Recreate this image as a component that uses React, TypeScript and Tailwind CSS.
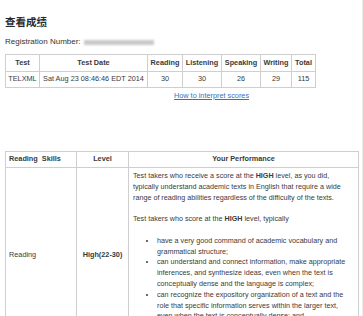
import React from 'react';

const scores = [
    { test: 'TELXML', date: 'Sat Aug 23 08:46:46 EDT 2014', reading: 30, listening: 30, speaking: 26, writing: 29, total: 115 },
];

const bullets = [
    'have a very good command of academic vocabulary and grammatical structure;',
    'can understand and connect information, make appropriate inferences, and synthesize ideas, even when the text is conceptually dense and the language is complex;',
    'can recognize the expository organization of a text and the role that specific information serves within the larger text, even when the text is conceptually dense; and',
    'can abstract major ideas from a text, even when the text is conceptually dense and contains complex language.',
];

function ScoreTable() {
    const th = 'border border-[#cfcfcf] h-[17px] font-bold text-center p-0';
    const td = 'border border-[#cfcfcf] h-[16px] text-center p-0';
    return (
        <table className="table-fixed border-collapse text-[7.3px] text-[#3a3a3a] w-[310px]">
            <colgroup>
                <col className="w-[34px]" />
                <col className="w-[108px]" />
                <col className="w-[35px]" />
                <col className="w-[39px]" />
                <col className="w-[39px]" />
                <col className="w-[31px]" />
                <col className="w-[24px]" />
            </colgroup>
            <thead>
                <tr>
                    <th className={th}>Test</th>
                    <th className={th}>Test Date</th>
                    <th className={th}>Reading</th>
                    <th className={th}>Listening</th>
                    <th className={th}>Speaking</th>
                    <th className={th}>Writing</th>
                    <th className={th}>Total</th>
                </tr>
            </thead>
            <tbody>
                {scores.map((s) => (
                    <tr key={s.test}>
                        <td className={td}>{s.test}</td>
                        <td className={td}>{s.date}</td>
                        <td className={td}>{s.reading}</td>
                        <td className={td}>{s.listening}</td>
                        <td className={td}>{s.speaking}</td>
                        <td className={td}>{s.writing}</td>
                        <td className={td}>{s.total}</td>
                    </tr>
                ))}
            </tbody>
        </table>
    );
}

function SkillsTable() {
    const cell = 'border border-[#cfcfcf]';
    return (
        <table className="table-fixed border-collapse text-[7.3px] text-[#3a3a3a] w-[353px]">
            <colgroup>
                <col className="w-[71px]" />
                <col className="w-[52px]" />
                <col className="w-[230px]" />
            </colgroup>
            <thead>
                <tr>
                    <th className={`${cell} h-[16px] text-left font-bold pl-[3px] py-0`}>Reading&nbsp;&nbsp;Skills</th>
                    <th className={`${cell} h-[16px] text-center font-bold p-0`}>Level</th>
                    <th className={`${cell} h-[16px] text-center font-bold p-0`}>Your Performance</th>
                </tr>
            </thead>
            <tbody>
                <tr>
                    <td className={`${cell} pl-[3px] align-middle`}>Reading</td>
                    <td className={`${cell} text-center font-bold align-middle`}>High(22-30)</td>
                    <td className={`${cell} align-top pl-[4px] pr-[4px] pt-[3px] text-[7.2px] leading-[10.8px]`}>
                        <p className="mb-[10.8px]">
                            Test takers who receive a score at the <b>HIGH</b> level, as you did, typically understand academic
                            texts in English that require a wide range of reading abilities regardless of the difficulty of the texts.
                        </p>
                        <p className="mb-[10.8px]">
                            Test takers who score at the <b>HIGH</b> level, typically
                        </p>
                        <ul className="list-disc pl-[24px]">
                            {bullets.map((b) => (
                                <li key={b}>{b}</li>
                            ))}
                        </ul>
                    </td>
                </tr>
            </tbody>
        </table>
    );
}

export default function App() {
    return (
        <div className="w-[363px] h-[316px] overflow-hidden bg-white border-r border-[#ececec] text-[#333] font-['Liberation_Sans','Noto_Sans_CJK_SC',sans-serif]">
            <div className="pl-[5px]">
                <h1 className="pt-[16px] text-[10.5px] leading-[12px] font-bold text-[#2a2a2a]">查看成绩</h1>
                <div className="mt-[9px] flex items-center text-[8px] leading-[10px]">
                    <span>Registration Number:</span>
                    <span className="ml-[3px] inline-block w-[70px] h-[5px] bg-[#c9c9c9] blur-[1px]" />
                </div>
                <div className="mt-[7px]">
                    <ScoreTable />
                </div>
                <div className="mt-[3px] pl-[169px] text-[7.3px] leading-[10px]">
                    <a className="text-[#3d70b8] underline">How to interpret scores</a>
                </div>
                <div className="mt-[50px]">
                    <SkillsTable />
                </div>
            </div>
        </div>
    );
}
